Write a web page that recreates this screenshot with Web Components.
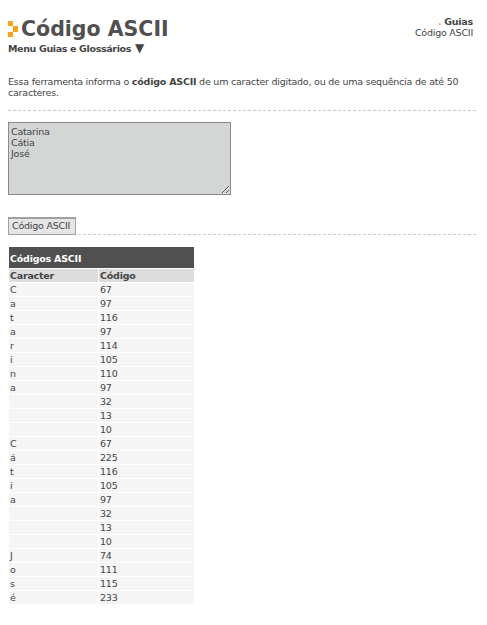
<!DOCTYPE html>
<html lang="pt">
<head>
<meta charset="utf-8">
<title>Código ASCII</title>
<style>
  html, body { margin: 0; background: #fff; }
  body { font: 9.5px "DejaVu Sans", Verdana, sans-serif; letter-spacing: -0.22px; color: #444; }
</style>
</head>
<body>
<ascii-page></ascii-page>
<script>
const CHARS = [
  ['C', 67], ['a', 97], ['t', 116], ['a', 97], ['r', 114], ['i', 105], ['n', 110], ['a', 97],
  ['', 32], ['', 13], ['', 10],
  ['C', 67], ['á', 225], ['t', 116], ['i', 105], ['a', 97],
  ['', 32], ['', 13], ['', 10],
  ['J', 74], ['o', 111], ['s', 115], ['é', 233]
]

customElements.define('page-header',
  class PageHeader extends HTMLElement {
    constructor() {
      super()
      this.attachShadow({ mode: "open" })
      this.shadowRoot.innerHTML = `
        <style>
          :host { display: flex; justify-content: space-between; align-items: flex-start; box-sizing: border-box; height: 61px; padding: 16px 14px 0 8px; }
          .title { display: flex; align-items: center; gap: 3px; height: 26px; }
          h1 { margin: 0; font-size: 20.5px; letter-spacing: 0; line-height: 26px; font-weight: bold; color: #505050; }
          svg { display: block; }
          .menu { margin-top: -1px; font-size: 9.5px; letter-spacing: -0.35px; line-height: 14px; font-weight: bold; color: #444; }
          .menu span { font-size: 12px; letter-spacing: 0; margin-left: 1px; }
          .crumbs { text-align: right; line-height: 11px; }
          .crumbs i { font-style: normal; font-weight: bold; color: #f49a4a; }
          .crumbs b { color: #444; }
        </style>
        <div>
          <div class="title">
            <svg width="10" height="16" viewBox="0 0 10 16"><path d="M0 0h5v5h-5z M5 5h5v6h-5z M0 11h5v5h-5z" fill="#f8a21c"/></svg>
            <h1><slot></slot></h1>
          </div>
          <div class="menu">Menu Guias e Glossários <span>▼</span></div>
        </div>
        <div class="crumbs"><i>.</i> <b>Guias</b><br>Código ASCII</div>`
    }
  }
)

customElements.define('dashed-rule',
  class DashedRule extends HTMLElement {
    constructor() {
      super()
      this.attachShadow({ mode: "open" })
      this.shadowRoot.innerHTML = `
        <style>
          :host { display: block; height: 0; margin: 0 11px 0 8px; border-top: 1px dashed #ccc; }
        </style>`
    }
  }
)

customElements.define('ascii-form',
  class AsciiForm extends HTMLElement {
    constructor() {
      super()
      this.attachShadow({ mode: "open" })
      this.shadowRoot.innerHTML = `
        <style>
          :host { display: block; position: relative; z-index: 1; height: 112px; padding: 0 8px; }
          textarea {
            display: block; box-sizing: border-box; width: 223px; height: 73px; margin: 0; padding: 3px 2px;
            background: #d3d6d5; border: 1px solid #8a8a8a; color: #444;
            font: 9.5px/11px "DejaVu Sans", Verdana, sans-serif; letter-spacing: -0.22px;
          }
          button {
            display: block; box-sizing: border-box; width: 68px; height: 18px; margin: 22px 0 0; padding: 0 0 2px;
            background: #e6e6e6; border: 1px solid #a0a0a0; border-top-width: 2px; color: #444;
            font: 9.5px "DejaVu Sans", Verdana, sans-serif; letter-spacing: -0.22px;
            text-align: left; text-indent: 3px;
          }
        </style>
        <textarea>Catarina
Cátia
José</textarea>
        <button type="button">Código ASCII</button>`
    }
  }
)

customElements.define('ascii-table',
  class AsciiTable extends HTMLElement {
    constructor() {
      super()
      this.attachShadow({ mode: "open" })
      const rows = CHARS.map(([c, n]) => `<div class="row"><span>${c}</span><span>${n}</span></div>`).join('')
      this.shadowRoot.innerHTML = `
        <style>
          :host { display: block; width: 185px; margin: 12px 0 0 9px; line-height: 13px; }
          .caption { height: 21px; margin-bottom: 1px; padding-left: 1px; background: #505050; color: #fff; font-weight: bold; line-height: 23px; }
          .row { display: grid; grid-template-columns: 89px 95px; gap: 1px; height: 13px; margin-bottom: 1px; }
          .row span { padding-left: 1px; background: #f5f5f5; }
          .head span { background: #dcdcdc; font-weight: bold; }
        </style>
        <div class="caption">Códigos ASCII</div>
        <div class="row head"><span>Caracter</span><span>Código</span></div>
        ${rows}`
    }
  }
)

customElements.define('ascii-page',
  class AsciiPage extends HTMLElement {
    constructor() {
      super()
      this.attachShadow({ mode: "open" })
      this.shadowRoot.innerHTML = `
        <style>
          :host { display: block; }
          p { box-sizing: border-box; margin: 0; height: 49px; padding: 15px 8px 0; line-height: 11px; }
          .gap { height: 11px; }
        </style>
        <page-header>Código ASCII</page-header>
        <p>Essa ferramenta informa o <b>código ASCII</b> de um caracter digitado, ou de uma sequência de até 50<br>caracteres.</p>
        <dashed-rule></dashed-rule>
        <div class="gap"></div>
        <ascii-form></ascii-form>
        <dashed-rule></dashed-rule>
        <ascii-table></ascii-table>`
    }
  }
)
</script>
</body>
</html>
